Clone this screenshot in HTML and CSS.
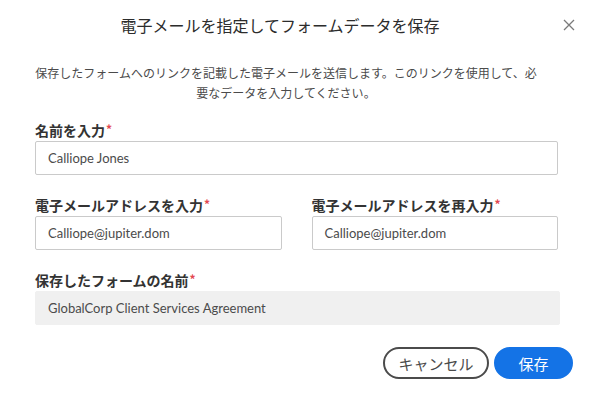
FILE: index.html
```html
<!DOCTYPE html>
<html lang="ja">
<head>
<meta charset="utf-8">
<link rel="stylesheet" href="styles.css">
</head>
<body>
<div class="dialog">
  <div class="header">
    <h1 class="title">電子メールを指定してフォームデータを保存</h1>
    <button class="close" aria-label="閉じる">
      <svg width="12" height="12" viewBox="0 0 12 12"><path d="M1 1 L11 11 M11 1 L1 11" stroke="#7a7a7a" stroke-width="1.3" fill="none"/></svg>
    </button>
  </div>
  <p class="desc">保存したフォームへのリンクを記載した電子メールを送信します。このリンクを使用して、必要なデータを入力してください。</p>
  <div class="form">
    <div class="field">
      <label class="label">名前を入力<span class="req">*</span></label>
      <div class="input">Calliope Jones</div>
    </div>
    <div class="row">
      <div class="field">
        <label class="label">電子メールアドレスを入力<span class="req">*</span></label>
        <div class="input">Calliope@jupiter.dom</div>
      </div>
      <div class="field">
        <label class="label">電子メールアドレスを再入力<span class="req">*</span></label>
        <div class="input">Calliope@jupiter.dom</div>
      </div>
    </div>
    <div class="field">
      <label class="label">保存したフォームの名前<span class="req">*</span></label>
      <div class="input readonly">GlobalCorp Client Services Agreement</div>
    </div>
  </div>
  <div class="actions">
    <button class="btn cancel">キャンセル</button>
    <button class="btn save">保存</button>
  </div>
</div>
</body>
</html>
```
FILE: styles.css
```css
* { box-sizing: border-box; }
html, body { margin: 0; padding: 0; background: #fff; }
body {
  font-family: "Lato", "Noto Sans CJK JP", sans-serif;
  color: #2c2c2c;
  width: 600px;
  height: 413px;
  overflow: hidden;
}
.dialog { display: flex; flex-direction: column; }
.header {
  height: 50px;
  display: flex;
  align-items: center;
}
.title {
  flex: 1;
  margin: 0;
  text-align: center;
  font-family: "Noto Sans CJK JP", sans-serif;
  font-weight: 400;
  font-size: 16px;
  color: #2c2c2c;
}
.close {
  width: 18px;
  height: 18px;
  margin-right: 22px;
  padding: 0;
  border: 0;
  background: none;
  display: flex;
  align-items: center;
  justify-content: center;
}
.desc {
  margin: 13px 59px 0 31px;
  text-align: center;
  font-family: "Noto Sans CJK JP", sans-serif;
  font-size: 12px;
  line-height: 20px;
  color: #4b4b4b;
}
.form {
  padding: 0 42px 0 35px;
  display: flex;
  flex-direction: column;
  gap: 20px;
  margin-top: 17px;
}
.row {
  display: grid;
  grid-template-columns: 1fr 1fr;
  column-gap: 30px;
}
.field { display: flex; flex-direction: column; }
.label {
  display: block;
  height: 20px;
  font-family: "Noto Sans CJK JP", sans-serif;
  font-size: 14px;
  font-weight: 700;
  line-height: 20px;
  color: #333;
  margin-bottom: 1px;
}
.req {
  color: #e34850;
  font-size: 12px;
  line-height: 1;
  margin-left: 1px;
  position: relative;
  top: -2px;
}
.input {
  height: 34px;
  border: 1px solid #cacaca;
  border-radius: 2px;
  padding: 0 12px;
  display: flex;
  align-items: center;
  font-size: 13px;
  color: #4b4b4b;
}
.input.readonly {
  background: #f0f0f0;
  border-color: #f0f0f0;
  margin-right: -2px;
}
.actions {
  display: flex;
  justify-content: flex-end;
  gap: 5px;
  margin-top: 22px;
  padding-right: 27px;
}
.btn {
  height: 32px;
  border-radius: 16px;
  font-family: "Noto Sans CJK JP", sans-serif;
  font-size: 15px;
  padding: 0;
  display: flex;
  align-items: center;
  justify-content: center;
}
.cancel {
  width: 106px;
  border: 2px solid #4b4b4b;
  background: #fff;
  color: #4b4b4b;
}
.save {
  width: 79px;
  border: 2px solid #1473e6;
  background: #1473e6;
  color: #fff;
}
```
